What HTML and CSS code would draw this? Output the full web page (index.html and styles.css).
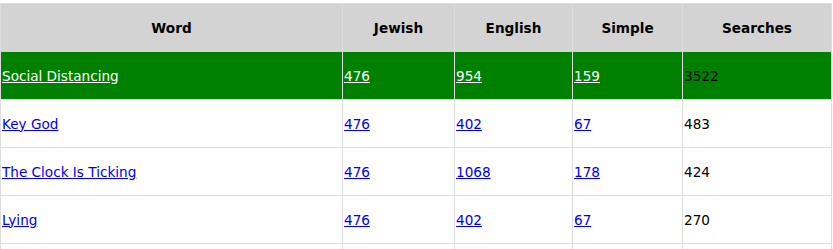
FILE: index.html
```html
<!DOCTYPE html>
<html>
<head>
<meta charset="utf-8">
<link rel="stylesheet" href="styles.css">
</head>
<body>
<table class="words">
  <colgroup>
    <col class="c-word"><col class="c-jew"><col class="c-eng"><col class="c-sim"><col class="c-sea">
  </colgroup>
  <thead>
    <tr><th>Word</th><th>Jewish</th><th>English</th><th>Simple</th><th>Searches</th></tr>
  </thead>
  <tbody>
    <tr class="hl">
      <td><a href="#">Social Distancing</a></td>
      <td><a href="#">476</a></td>
      <td><a href="#">954</a></td>
      <td><a href="#">159</a></td>
      <td>3522</td>
    </tr>
    <tr>
      <td><a href="#">Key God</a></td>
      <td><a href="#">476</a></td>
      <td><a href="#">402</a></td>
      <td><a href="#">67</a></td>
      <td>483</td>
    </tr>
    <tr>
      <td><a href="#">The Clock Is Ticking</a></td>
      <td><a href="#">476</a></td>
      <td><a href="#">1068</a></td>
      <td><a href="#">178</a></td>
      <td>424</td>
    </tr>
    <tr>
      <td><a href="#">Lying</a></td>
      <td><a href="#">476</a></td>
      <td><a href="#">402</a></td>
      <td><a href="#">67</a></td>
      <td>270</td>
    </tr>
    <tr>
      <td>&nbsp;</td><td>&nbsp;</td><td>&nbsp;</td><td>&nbsp;</td><td>&nbsp;</td>
    </tr>
  </tbody>
</table>
</body>
</html>
```
FILE: styles.css
```css
html, body {
  margin: 0;
  padding: 0;
  background: #fff;
}
body {
  font-family: "DejaVu Sans", Verdana, sans-serif;
  font-size: 13.6px;
  color: #000;
  overflow: hidden;
}
.words {
  margin-top: 3px;
  width: 831px;
  table-layout: fixed;
  border-collapse: collapse;
}
.c-word { width: 342px; }
.c-jew { width: 112px; }
.c-eng { width: 118px; }
.c-sim { width: 110px; }
.c-sea { width: 149px; }
.words th,
.words td {
  border: 1px solid #ddd;
  height: 47px;
  padding: 0 1px;
  vertical-align: middle;
  text-align: left;
}
.words th {
  background: #d3d3d3;
  border-color: #ddd #ddd #d3d3d3 #ddd;
  text-align: center;
  font-weight: bold;
}
.words a {
  color: #0000ee;
  text-decoration: underline;
}
.words tr.hl td {
  background: #008000;
  color: #000;
}
.words tr.hl a {
  color: #fff;
}
```
